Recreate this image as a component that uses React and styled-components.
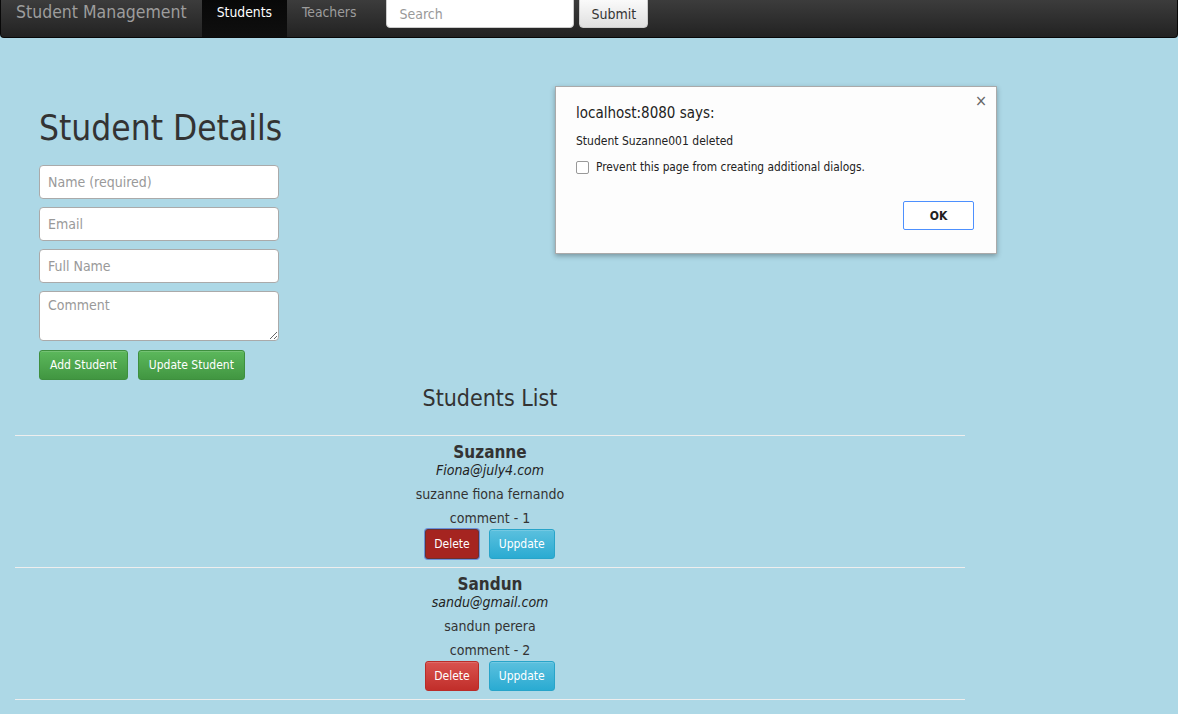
import React from "react";
import styled, { createGlobalStyle } from "styled-components";

const Global = createGlobalStyle`
  html, body { margin: 0; padding: 0; }
  body {
    background: #add8e6;
    font-family: "DejaVu Sans Condensed", "DejaVu Sans", sans-serif;
    color: #333;
    font-size: 14px;
  }
  * { box-sizing: border-box; }
`;

const Page = styled.div`
  position: relative;
  width: 1178px;
  height: 714px;
  overflow: hidden;
`;

const Navbar = styled.nav`
  height: 38px;
  display: flex;
  align-items: flex-start;
  background: linear-gradient(to bottom, #3c3c3c 0%, #222 100%);
  border: 1px solid #080808;
  border-top: none;
  border-radius: 0 0 4px 4px;
  overflow: hidden;
`;

const Brand = styled.a`
  padding: 0 15px 0 15px;
  line-height: 24px;
  font-size: 17.5px;
  color: #9d9d9d;
  white-space: nowrap;
`;

const NavItem = styled.a`
  height: 38px;
  padding: 0 15px;
  line-height: 24px;
  font-size: 13.8px;
  color: ${(p) => (p.$active ? "#fff" : "#9d9d9d")};
  background: ${(p) => (p.$active ? "linear-gradient(to bottom, #080808 0%, #0f0f0f 100%)" : "transparent")};
  white-space: nowrap;
`;

const NavForm = styled.form`
  display: flex;
  gap: 5px;
  margin: -6px 0 0 15px;
`;

const SearchInput = styled.input`
  width: 188px;
  height: 34px;
  border: 1px solid #ccc;
  border-radius: 4px;
  padding: 6px 12px 0;
  font: inherit;
  font-size: 14px;
  background: #fff;
  &::placeholder { color: #999; }
`;

const SubmitBtn = styled.button`
  width: 69px;
  height: 34px;
  padding-top: 6px;
  border: 1px solid #ccc;
  border-radius: 4px;
  background: linear-gradient(to bottom, #fff 0%, #e0e0e0 100%);
  font: inherit;
  font-size: 14px;
  color: #333;
`;

const Content = styled.div`
  padding: 0 0 0 15px;
`;

const FormCol = styled.div`
  width: 264px;
  padding: 70px 0 0 24px;
  display: flex;
  flex-direction: column;
  gap: 8px;
`;

const Title = styled.h1`
  margin: 0 0 9px;
  font-size: 35px;
  font-weight: normal;
  line-height: 40px;
  color: #333;
  white-space: nowrap;
`;

const Field = styled.input`
  width: 240px;
  height: 34px;
  border: 1px solid #aaa;
  border-radius: 4px;
  padding: 0 8px;
  font: inherit;
  font-size: 14px;
  background: #fff;
  &::placeholder { color: #999; }
`;

const Area = styled.textarea`
  width: 240px;
  height: 50px;
  border: 1px solid #aaa;
  border-radius: 4px;
  padding: 5px 8px;
  font: inherit;
  font-size: 14px;
  background: #fff;
  resize: vertical;
  &::placeholder { color: #999; }
`;

const BtnRow = styled.div`
  display: flex;
  gap: 10px;
  margin-top: 1px;
`;

const Btn = styled.button`
  height: 30px;
  padding: 0 ${(p) => p.$pad || 10}px;
  font: inherit;
  font-size: 12px;
  color: #fff;
  border-radius: 3px;
  border: 1px solid ${(p) => p.$border};
  background: ${(p) => p.$bg};
  box-shadow: ${(p) => p.$focus ? "0 0 0 1px #6a8fd8" : "inset 0 1px 0 rgba(255,255,255,.15)"};
  white-space: nowrap;
`;

const ListSection = styled.div`
  width: 950px;
`;

const ListTitle = styled.h2`
  margin: 3px 0 22px;
  text-align: center;
  font-size: 23px;
  font-weight: normal;
  line-height: 30px;
  color: #333;
`;

const Item = styled.div`
  border-top: 1px solid #eee;
  text-align: center;
  padding: 6px 0 8px;
  &:last-child { border-bottom: 1px solid #eee; }
`;

const Name = styled.div`
  font-weight: bold;
  font-size: 17px;
  line-height: 20px;
  color: #333;
`;

const Email = styled.div`
  font-style: italic;
  font-size: 14px;
  line-height: 16px;
  margin-bottom: 4px;
  color: #222;
`;

const Line = styled.div`
  font-size: 14px;
  line-height: 24px;
  color: #333;
`;

const ItemBtns = styled.div`
  display: flex;
  justify-content: center;
  gap: 10px;
  margin-top: -1px;
`;

const Dialog = styled.div`
  position: absolute;
  left: 555px;
  top: 86px;
  width: 442px;
  height: 168px;
  background: #fdfdfd;
  border: 1px solid #aaa;
  box-shadow: 0 2px 5px rgba(0,0,0,.3);
  padding: 16px 20px 0 20px;
  color: #222;
`;

const DialogTitle = styled.div`
  font-size: 15px;
  line-height: 20px;
`;

const DialogMsg = styled.div`
  margin-top: 10px;
  font-size: 12px;
  line-height: 16px;
`;

const CheckRow = styled.label`
  display: flex;
  align-items: center;
  gap: 7px;
  margin-top: 11px;
  font-size: 11.8px;
`;

const Box = styled.span`
  width: 13px;
  height: 13px;
  border: 1px solid #999;
  border-radius: 2px;
  background: #fff;
`;

const Close = styled.span`
  position: absolute;
  right: 9px;
  top: 4px;
  font-size: 16px;
  color: #666;
`;

const DialogFooter = styled.div`
  display: flex;
  justify-content: flex-end;
  margin-top: 27px;
  padding-right: 2px;
`;

const OkBtn = styled.button`
  width: 71px;
  height: 29px;
  background: #fff;
  border: 1px solid #4d90fe;
  border-radius: 2px;
  font: inherit;
  font-size: 12px;
  font-weight: bold;
  color: #222;
`;

const students = [
  { name: "Suzanne", email: "Fiona@july4.com", full: "suzanne fiona fernando", comment: "comment - 1", focus: true },
  { name: "Sandun", email: "sandu@gmail.com", full: "sandun perera", comment: "comment - 2" },
];

export default function App() {
  return (
    <Page>
      <Global />
      <Navbar>
        <Brand>Student Management</Brand>
        <NavItem $active>Students</NavItem>
        <NavItem>Teachers</NavItem>
        <NavForm onSubmit={(e) => e.preventDefault()}>
          <SearchInput placeholder="Search" />
          <SubmitBtn type="button">Submit</SubmitBtn>
        </NavForm>
      </Navbar>
      <Content>
        <FormCol>
          <Title>Student Details</Title>
          <Field placeholder="Name (required)" />
          <Field placeholder="Email" />
          <Field placeholder="Full Name" />
          <Area placeholder="Comment" />
          <BtnRow>
            <Btn $bg="linear-gradient(to bottom, #5cb85c 0%, #419641 100%)" $border="#3e8f3e">Add Student</Btn>
            <Btn $bg="linear-gradient(to bottom, #5cb85c 0%, #419641 100%)" $border="#3e8f3e">Update Student</Btn>
          </BtnRow>
        </FormCol>
        <ListSection>
          <ListTitle>Students List</ListTitle>
          {students.map((s) => (
            <Item key={s.name}>
              <Name>{s.name}</Name>
              <Email>{s.email}</Email>
              <Line>{s.full}</Line>
              <Line>{s.comment}</Line>
              <ItemBtns>
                <Btn
                  $pad={8}
                  $focus={s.focus}
                  $border={s.focus ? "#6a3030" : "#b92c28"}
                  $bg={s.focus ? "#a52420" : "linear-gradient(to bottom, #d9534f 0%, #c12e2a 100%)"}
                >Delete</Btn>
                <Btn $pad={9} $border="#28a4c9" $bg="linear-gradient(to bottom, #5bc0de 0%, #2aabd2 100%)">Uppdate</Btn>
              </ItemBtns>
            </Item>
          ))}
        </ListSection>
      </Content>
      <Dialog>
        <Close>×</Close>
        <DialogTitle>localhost:8080 says:</DialogTitle>
        <DialogMsg>Student Suzanne001 deleted</DialogMsg>
        <CheckRow><Box />Prevent this page from creating additional dialogs.</CheckRow>
        <DialogFooter><OkBtn>OK</OkBtn></DialogFooter>
      </Dialog>
    </Page>
  );
}
